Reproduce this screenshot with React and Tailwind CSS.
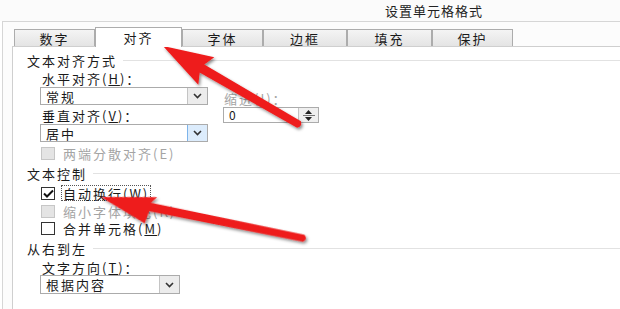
import React from "react";

const F = { fontFamily: '"Noto Sans CJK SC", "Noto Sans", sans-serif' };

function Chevron() {
  return (
    <svg width="9" height="6" viewBox="0 0 9 6">
      <path d="M1 1 L4.5 4.5 L8 1" fill="none" stroke="#333" strokeWidth="1.6" />
    </svg>
  );
}

function Select({ text, w, h, focused }) {
  return (
    <div className={`flex border border-[#ababab] bg-white ${w} ${h}`}>
      <div className="flex-1 flex items-center pl-[5px] text-[13px] tracking-[2px] leading-none text-[#1a1a1a]">{text}</div>
      <div
        className={`w-[20px] flex items-center justify-center border-l ${
          focused ? "bg-[#dcecfc] border-[#7eb4ea]" : "bg-[#ececec] border-[#c4c4c4]"
        }`}
      >
        <Chevron />
      </div>
    </div>
  );
}

function Label({ children, className = "" }) {
  return (
    <div className={`h-[14px] flex items-center text-[13px] tracking-[2px] leading-none whitespace-nowrap ${className}`}>
      {children}
    </div>
  );
}

function Header({ text }) {
  return (
    <div className="h-[14px] flex items-center">
      <span className="text-[13px] tracking-[2px] leading-none text-[#1a1a1a] whitespace-nowrap">{text}</span>
      <div className="flex-1 h-px bg-[#e2e2e2] ml-[6px]" />
    </div>
  );
}

function Check({ state, children, focus }) {
  const box =
    state === "disabled"
      ? "bg-[#e4e4e4] border-[#c6c6c6]"
      : "bg-white border-[#333]";
  return (
    <div className={`flex items-center pl-[1px] ${focus ? "h-[16px]" : "h-[14px]"}`}>
      <div className={`w-[14px] h-[13px] border ${box} flex items-center justify-center`}>
        {state === "checked" && (
          <svg width="11" height="9" viewBox="0 0 11 9">
            <path d="M1 4.5 L4 7.5 L10 1.5" fill="none" stroke="#111" strokeWidth="2" />
          </svg>
        )}
      </div>
      <div
        className={`ml-[6px] flex items-center px-[1px] text-[13px] tracking-[2px] leading-none whitespace-nowrap ${
          state === "disabled" ? "text-[#a4a4a4]" : "text-[#1a1a1a]"
        } ${focus ? "h-[16px] border border-dotted border-[#555]" : "h-[14px] border-x border-transparent"}`}
      >
        {children}
      </div>
    </div>
  );
}

function Tab({ text, w, active }) {
  return active ? (
    <div className={`${w} h-[20px] -mb-px relative z-10 bg-white border border-b-0 border-[#acacac] flex items-center justify-center text-[13px] tracking-[2px] leading-none text-[#1a1a1a]`}>
      {text}
    </div>
  ) : (
    <div className={`${w} h-[17px] bg-gradient-to-b from-[#f4f4f4] to-[#e4e4e4] border border-b-0 border-[#acacac] flex items-center justify-center text-[13px] tracking-[2px] leading-none text-[#1a1a1a]`}>
      {text}
    </div>
  );
}

export default function App() {
  return (
    <div style={F} className="w-[620px] h-[309px] bg-white relative overflow-hidden text-[#1a1a1a]">
      <div className="h-[21px] flex items-center pl-[385px] bg-[#fbfbfb] text-[13px] tracking-[1px] leading-none text-[#222]">
        设置单元格格式
      </div>
      <div className="ml-[2px] border-l border-t border-[#d6d6d6] h-[288px] pt-[5px] pl-[9px] bg-[#fcfcfc]">
        <div className="flex items-end pl-[2px] h-[19px]">
          <Tab text="数字" w="w-[81px]" />
          <Tab text="对齐" w="w-[87px]" active />
          <Tab text="字体" w="w-[81px]" />
          <Tab text="边框" w="w-[84px]" />
          <Tab text="填充" w="w-[85px]" />
          <Tab text="保护" w="w-[81px]" />
        </div>
        <div className="border-l border-t border-[#cfcfcf] bg-white h-[270px] pl-[14px]">
          <div className="mt-[6px]">
            <Header text="文本对齐方式" />
          </div>
          <div className="flex ml-[13px]">
            <div className="w-[168px]">
              <Label className="mt-[4px] pl-[2px]">水平对齐(<u>H</u>)：</Label>
              <div className="mt-[2px]">
                <Select text="常规" w="w-[168px]" h="h-[18px]" />
              </div>
              <Label className="mt-[3px] pl-[2px]">垂直对齐(<u>V</u>)：</Label>
              <div className="mt-[2px]">
                <Select text="居中" w="w-[168px]" h="h-[18px]" focused />
              </div>
            </div>
            <div className="ml-[15px] pt-[24px]">
              <Label className="text-[#a4a4a4] pl-[1px]">缩进(I)：</Label>
              <div className="mt-[2px] w-[96px] h-[16px] border border-[#ababab] flex">
                <div className="flex-1 flex items-center pl-[5px] text-[12px] leading-none">0</div>
                <div className="w-[20px] border-l border-[#c4c4c4] bg-[#efefef] flex flex-col items-center justify-center gap-[1px]">
                  <svg width="7" height="4" viewBox="0 0 7 4"><path d="M0 4 L3.5 0 L7 4 Z" fill="#222" /></svg>
                  <div className="w-[12px] h-px bg-[#777]" />
                  <svg width="7" height="4" viewBox="0 0 7 4"><path d="M0 0 L3.5 4 L7 0 Z" fill="#222" /></svg>
                </div>
              </div>
            </div>
          </div>
          <div className="ml-[13px] mt-[4px]">
            <Check state="disabled">两端分散对齐(E)</Check>
          </div>
          <div className="mt-[6px]">
            <Header text="文本控制" />
          </div>
          <div className="ml-[13px] mt-[5px]">
            <Check state="checked" focus>自动换行(<u>W</u>)</Check>
          </div>
          <div className="ml-[13px] mt-[3px]">
            <Check state="disabled">缩小字体填充(K)</Check>
          </div>
          <div className="ml-[13px] mt-[3px]">
            <Check state="unchecked">合并单元格(<u>M</u>)</Check>
          </div>
          <div className="mt-[6px]">
            <Header text="从右到左" />
          </div>
          <div className="ml-[13px]">
            <Label className="mt-[5px] pl-[2px]">文字方向(<u>T</u>)：</Label>
            <div className="mt-[1px]">
              <Select text="根据内容" w="w-[140px]" h="h-[19px]" />
            </div>
          </div>
        </div>
      </div>

      <svg className="absolute left-0 top-0 pointer-events-none" width="620" height="309" viewBox="0 0 620 309">
        <defs>
          <filter id="sh" x="-20%" y="-20%" width="140%" height="140%">
            <feDropShadow dx="1.5" dy="2" stdDeviation="1.4" floodColor="#000" floodOpacity="0.45" />
          </filter>
        </defs>
        <g filter="url(#sh)" fill="#ee1b1b">
          <g transform="translate(163 46) rotate(30)">
            <path d="M0 0 L50 -16 L45 -4.6 L157 -3.8 Q161 0 157 3.8 L45 4.6 L50 16 Z" />
          </g>
          <g transform="translate(101 197) rotate(11.5)">
            <path d="M0 0 L55 -11 L50 -4.2 L207 -3.4 Q211 0 207 3.4 L50 4.2 L48 17 Z" />
          </g>
        </g>
      </svg>
    </div>
  );
}
